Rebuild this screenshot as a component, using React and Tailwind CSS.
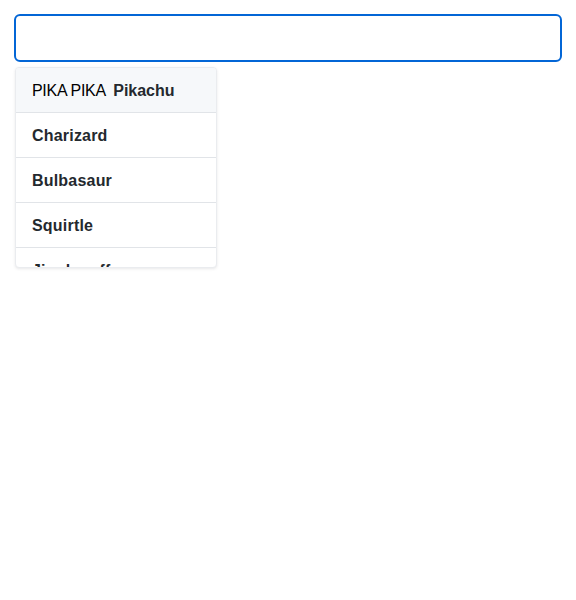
export default function App() {
  const items = ["Charizard", "Bulbasaur", "Squirtle", "Jigglypuff", "Mewtwo"];

  return (
    <div className="p-[14px] bg-white min-h-[600px]" style={{ fontFamily: '"Liberation Sans", Arial, sans-serif' }}>
      <input
        type="text"
        className="block w-full h-[48px] rounded-[6px] border-2 border-[#0366d6] px-3 text-base text-[#24292e] outline-none"
      />
      <div className="mt-[5px] ml-px w-[202px] h-[201px] overflow-hidden rounded-[4px] bg-white border border-[#eaecef] shadow-[0_1px_3px_rgba(27,31,35,0.1)]">
        <div className="h-[45px] pl-4 pt-[2px] flex items-center bg-[#f6f8fa] border-b border-[#e1e4e8] text-base text-[#24292e] whitespace-pre">
          <span className="text-black tracking-[-0.3px]">PIKA PIKA  </span>
          <span className="font-bold">Pikachu</span>
        </div>
        {items.map((name) => (
          <div
            key={name}
            className="h-[45px] pl-4 pt-[2px] flex items-center border-b border-[#e1e4e8] text-base font-bold text-[#24292e] tracking-[0.2px]"
          >
            {name}
          </div>
        ))}
      </div>
    </div>
  );
}
